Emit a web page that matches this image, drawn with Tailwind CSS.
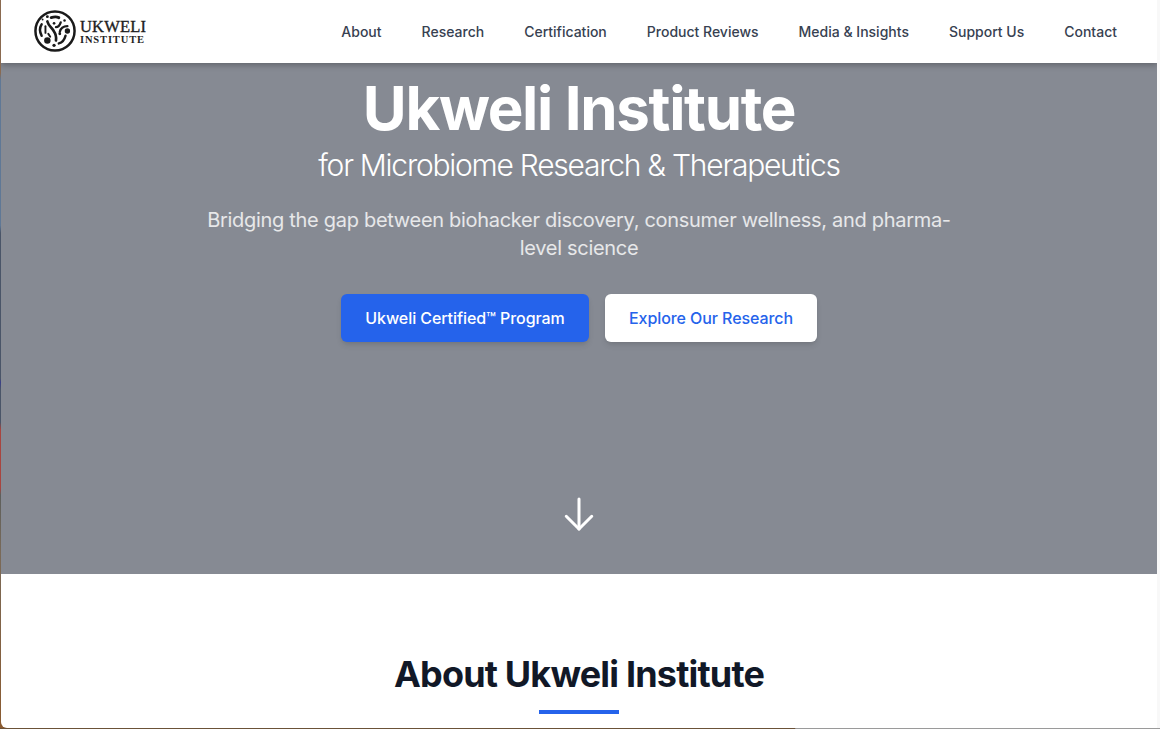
<!DOCTYPE html>
<html lang="en">
<head>
    <meta charset="UTF-8">
    <title>Ukweli Institute</title>
    <script src="https://cdn.jsdelivr.net/npm/@tailwindcss/browser@4"></script>
</head>
<body class="bg-[#f4f4f5] overflow-hidden">

<div class="h-[729px] w-[1160px] overflow-hidden">
    <!-- desktop wallpaper shows down the left edge -->
    <div class="h-[728px] flex bg-[linear-gradient(180deg,#8a6a50_0%,#8a6a50_10%,#5f7896_11%,#5f7896_31%,#4a5568_32%,#4a5568_52%,#3a3f8a_52.500%,#4a5568_53.500%,#4a5568_58%,#a8453f_59%,#a8453f_67%,#5d5f5c_68%,#7a6a58_76%,#8a5a30_100%)]">
        <div class="ml-px w-[1159px] h-[728px] flex flex-col overflow-hidden rounded-bl-[6px] bg-white font-['Inter',sans-serif] border-r-[3px] border-[#f8f8f8]">

            <header class="relative z-10 h-[63px] shrink-0 bg-white shadow-[0_2px_6px_rgba(0,0,0,0.28)] flex items-center justify-between pl-[33px] pr-[40px] pb-[1px]">
                <a href="#" class="flex items-center gap-[4px]">
                    <svg width="42" height="42" viewBox="0 0 44 44" fill="none" stroke="#1a1a1a" stroke-linecap="round">
                        <circle cx="22" cy="22" r="20.500" stroke-width="2.600"/>
                        <path d="M14 12c1 4 4 6 6 9s4 5 3 11" stroke-width="2.800"/>
                        <path d="M18 8c3-1 6-1 8 0" stroke-width="3"/>
                        <path d="M23 18c3 0 4-2 5-5" stroke-width="2.400"/>
                        <path d="M27 23c1-4 4-6 8-6" stroke-width="2.400"/>
                        <path d="M8 15c-2 3-2 8 0 12" stroke-width="2.600"/>
                        <path d="M26 35c4-1 6-4 7-8" stroke-width="2.600"/>
                        <path d="M12 17v7" stroke-width="2"/>
                        <path d="M15 25l2 3" stroke-width="2"/>
                        <g fill="#1a1a1a" stroke="none">
                            <circle cx="14" cy="32" r="3.400"/>
                            <circle cx="35" cy="22" r="2.800"/>
                            <circle cx="14" cy="7" r="1.500"/>
                            <circle cx="27" cy="25" r="1.500"/>
                            <circle cx="21" cy="37" r="1.700"/>
                            <circle cx="21" cy="14" r="1.400"/>
                            <circle cx="32" cy="11" r="1.300"/>
                            <circle cx="9" cy="10" r="1"/>
                        </g>
                    </svg>
                    <span class="flex flex-col mt-[2px] font-['Liberation_Serif',serif] text-[#1f1f1f]">
                        <span class="text-[16.500px] leading-[15px] tracking-[0.2px] [-webkit-text-stroke:0.35px_#1f1f1f]">UKWELI</span>
                        <span class="text-[10.500px] leading-[11px] tracking-[0.85px] font-bold">INSTITUTE</span>
                    </span>
                </a>
                <nav class="flex items-center gap-[40px] text-[14px] font-medium text-[#374151]">
                    <a href="#">About</a>
                    <a href="#">Research</a>
                    <a href="#">Certification</a>
                    <a href="#">Product Reviews</a>
                    <a href="#">Media &amp; Insights</a>
                    <a href="#">Support Us</a>
                    <a href="#">Contact</a>
                </nav>
            </header>

            <section class="h-[511px] shrink-0 bg-[#868a93] flex flex-col items-center text-white text-center">
                <h1 class="mt-[8px] text-[60px] leading-[75px] font-bold tracking-[-1.35px]">Ukweli Institute</h1>
                <h2 class="mt-[1px] text-[30px] leading-[36px] font-light tracking-[-1.25px]">for Microbiome Research &amp; Therapeutics</h2>
                <p class="mt-[23px] w-[768px] text-[20px] leading-[28px] text-white/80 tracking-[-0.3px]">Bridging the gap between biohacker discovery, consumer wellness, and pharma-level science</p>
                <div class="mt-[32px] flex gap-[16px]">
                    <a href="#" class="h-[48px] w-[248px] flex items-center justify-center rounded-[6px] bg-[#2563eb] font-medium text-[16px] tracking-[-0.08px] shadow-md">Ukweli Certified™ Program</a>
                    <a href="#" class="h-[48px] w-[212px] flex items-center justify-center rounded-[6px] bg-white font-medium text-[16px] tracking-[-0.08px] text-[#2563eb] shadow-md">Explore Our Research</a>
                </div>
                <svg class="mt-[153px]" width="36" height="38" viewBox="0 0 24 25" fill="none" stroke="white" stroke-width="2" stroke-linecap="round" stroke-linejoin="round">
                    <path d="M12 2.500v20"/>
                    <path d="M3.500 14l8.500 8.500 8.500-8.500"/>
                </svg>
            </section>

            <section class="flex flex-col items-center">
                <h2 class="mt-[80px] text-[36px] leading-[40px] font-bold text-[#111827] tracking-[-0.82px]">About Ukweli Institute</h2>
                <div class="mt-[16px] h-[4px] w-[80px] bg-[#2563eb]"></div>
            </section>
        </div>
    </div>
    <div class="h-px bg-[linear-gradient(90deg,#6b5238_0%,#6b5238_68.500%,#9a9a9a_68.600%)]"></div>
</div>

</body>
</html>
